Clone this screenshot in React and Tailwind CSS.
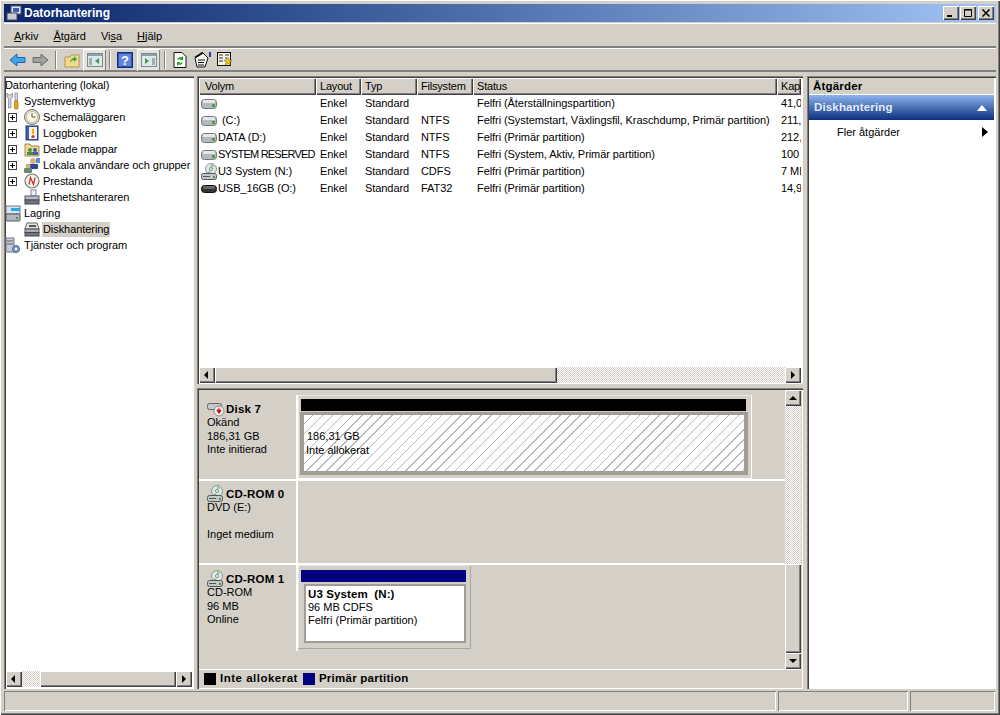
import React from "react";

const raised =
  "bg-[#d4d0c8] shadow-[inset_1px_1px_0_#fff,inset_-1px_-1px_0_#404040,inset_-2px_-2px_0_#808080]";
const sunken = "shadow-[inset_1px_1px_0_#808080,inset_-1px_-1px_0_#fff]";
const deepSunken =
  "shadow-[inset_1px_1px_0_#808080,inset_2px_2px_0_#404040,inset_-1px_-1px_0_#fff]";
const dither =
  "bg-[repeating-conic-gradient(#d4d0c8_0_25%,#ffffff_0_50%)] bg-[length:2px_2px]";

/* small drawings */
function DriveIcon({ dark }) {
  return (
    <svg width="17" height="16" viewBox="0 0 17 16">
      <rect x="0.5" y={dark ? 4.5 : 3.5} width="15" height={dark ? 7 : 9} rx="3" fill={dark ? "#333" : "#b4baba"} stroke={dark ? "#111" : "#777"} />
      <rect x="2" y={dark ? 5 : 4} width="12" height="3" rx="1" fill={dark ? "#666" : "#e6e8e8"} />
      {!dark && <rect x="11" y="8" width="3" height="3" fill="#4aa04a" />}
    </svg>
  );
}

function CdIcon() {
  return (
    <svg width="17" height="18" viewBox="0 0 17 18">
      <circle cx="10" cy="6" r="5.5" fill="#dfe6e6" stroke="#8a9a9a" />
      <circle cx="10" cy="6" r="1.5" fill="#fff" stroke="#7a8a8a" />
      <path d="M10 1l3 2-3 2zM8 8l-2 2 4 0z" fill="#7cc07c" />
      <rect x="0.5" y="10.5" width="15" height="6" rx="2" fill="#c4c8c8" stroke="#555" />
      <rect x="2" y="13" width="7" height="1" fill="#555" />
      <rect x="12" y="13" width="2" height="2" fill="#3c9a3c" />
    </svg>
  );
}

function TreeIcon({ name }) {
  if (name === "tools")
    return (
      <svg width="16" height="18" viewBox="0 0 16 18">
        <path d="M2 1v4l1.5 1.5V16H6V6.5L7.5 5V1L6 3H4z" fill="#d0d4d8" stroke="#667" strokeWidth="0.6" />
        <rect x="10" y="1" width="2.5" height="8" fill="#d8dce0" stroke="#667" strokeWidth="0.6" />
        <rect x="9.5" y="9" width="3.5" height="8" rx="1" fill="#eaa812" stroke="#8a5a00" strokeWidth="0.6" />
      </svg>
    );
  if (name === "clock")
    return (
      <svg width="16" height="16" viewBox="0 0 16 16">
        <circle cx="8" cy="8" r="7.5" fill="#e0dccc" stroke="#777" />
        <circle cx="8" cy="8" r="5.5" fill="#fbf6e4" stroke="#b5a878" strokeWidth="0.6" />
        <path d="M8 4V8h3.5" fill="none" stroke="#555" />
      </svg>
    );
  if (name === "log")
    return (
      <svg width="16" height="16" viewBox="0 0 16 16">
        <rect x="2" y="1" width="12" height="14" fill="#3a62b0" stroke="#1c3a78" />
        <rect x="5" y="2" width="8" height="12" fill="#f4f1e0" />
        <path d="M9 4v5" stroke="#e8b010" strokeWidth="2" />
        <circle cx="9" cy="11.5" r="1.6" fill="#d8342c" />
      </svg>
    );
  if (name === "share")
    return (
      <svg width="16" height="16" viewBox="0 0 16 16">
        <path d="M1 3h5l1 2h8v10H1z" fill="#f0d890" stroke="#a08a48" />
        <circle cx="6" cy="9" r="2" fill="#4d8a4d" />
        <rect x="3" y="11" width="6" height="3" fill="#4d8a4d" />
        <circle cx="11" cy="9" r="2" fill="#3a62b0" />
        <rect x="9" y="11" width="5" height="3" fill="#3a62b0" />
      </svg>
    );
  if (name === "users")
    return (
      <svg width="16" height="16" viewBox="0 0 16 16">
        <circle cx="9" cy="4" r="3" fill="#d8b088" />
        <rect x="5" y="7" width="9" height="5" rx="1" fill="#28489a" />
        <rect x="12" y="1" width="4" height="5" fill="#5b8ed8" />
        <circle cx="4" cy="9" r="2.5" fill="#d8b088" />
        <rect x="0" y="11" width="8" height="5" rx="1" fill="#688a68" />
      </svg>
    );
  if (name === "perf")
    return (
      <svg width="16" height="16" viewBox="0 0 16 16">
        <circle cx="8" cy="8" r="7" fill="#f4f1e8" stroke="#777" strokeWidth="1.2" />
        <path d="M5 11.5L6.5 4.5 9.5 11.5 11 4.5" fill="none" stroke="#c8302c" strokeWidth="1.2" />
      </svg>
    );
  if (name === "device")
    return (
      <svg width="16" height="16" viewBox="0 0 16 16">
        <rect x="7" y="1" width="5" height="6" fill="#eef0f2" stroke="#889" />
        <rect x="1" y="7" width="14" height="4" fill="#b8bcc0" stroke="#556" />
        <rect x="1" y="11" width="14" height="4" fill="#70757c" stroke="#445" />
      </svg>
    );
  if (name === "storage")
    return (
      <svg width="16" height="17" viewBox="0 0 16 17">
        <rect x="1" y="1" width="14" height="8" fill="#d8e4ee" stroke="#778" />
        <rect x="6" y="3" width="9" height="3" fill="#2ea4e0" />
        <rect x="1" y="9" width="14" height="7" rx="1" fill="#b4b8bc" stroke="#556" />
        <rect x="11" y="12" width="2" height="2" fill="#3c9a3c" />
      </svg>
    );
  if (name === "disk")
    return (
      <svg width="16" height="16" viewBox="0 0 16 16">
        <path d="M3 2h10l2 6H1z" fill="#e6e6e2" stroke="#666" />
        <rect x="5" y="4" width="7" height="2" fill="#555" />
        <rect x="1" y="8" width="14" height="3.5" fill="#a8acb0" stroke="#555" />
        <rect x="1" y="11.5" width="14" height="3.5" fill="#70757c" stroke="#445" />
      </svg>
    );
  if (name === "services")
    return (
      <svg width="16" height="17" viewBox="0 0 16 17">
        <rect x="1" y="1" width="8" height="14" fill="#c8ccd4" stroke="#778" />
        <path d="M2 4h6M2 7h6" stroke="#556" />
        <circle cx="11" cy="12" r="3.5" fill="#7aa0cc" stroke="#44668a" />
        <circle cx="11" cy="12" r="1.2" fill="#fff" />
      </svg>
    );
  return null;
}

function Expander() {
  return (
    <div className="w-[9px] h-[9px] border border-[#404040] bg-white flex items-center justify-center">
      <svg width="7" height="7" viewBox="0 0 7 7">
        <path d="M1 3.5h5M3.5 1v5" stroke="#000" />
      </svg>
    </div>
  );
}

function Arrow({ dir }) {
  const paths = {
    left: "M5 0v8L1 4z",
    right: "M2 0v8l4-4z",
    up: "M0 6h8L4 2z",
    down: "M0 2h8L4 6z",
  };
  return (
    <svg width="8" height="8" viewBox="0 0 8 8">
      <path d={paths[dir]} fill="#000" />
    </svg>
  );
}

function ScrollBtn({ dir }) {
  return (
    <div className={`${raised} w-[16px] h-[16px] shrink-0 flex items-center justify-center`}>
      <Arrow dir={dir} />
    </div>
  );
}

function TitleButton({ children }) {
  return (
    <div className={`${raised} w-[16px] h-[14px] flex items-center justify-center`}>
      <svg width="10" height="10" viewBox="0 0 10 10">
        {children}
      </svg>
    </div>
  );
}

function Sep({ className }) {
  return <div className={`w-px h-[18px] bg-[#808080] border-r border-r-white box-content ${className}`} />;
}

function Toolbar() {
  return (
    <div className="h-[24px] flex items-center pl-[5px] border-t border-t-white border-b-2 border-b-[#808080]">
      <svg width="17" height="16" viewBox="0 0 17 16" className="mr-[6px]">
        <path d="M1 8l7-6v3.5h8v5H8V14z" fill="#3fa4ec" stroke="#1c68b0" />
      </svg>
      <svg width="17" height="16" viewBox="0 0 17 16">
        <path d="M16 8L9 2v3.5H1v5h8V14z" fill="#a0a0a0" stroke="#6c6c6c" />
      </svg>
      <Sep className="ml-[6px] mr-[7px]" />
      <svg width="16" height="16" viewBox="0 0 16 16" className="mr-[3px]">
        <path d="M1 5h5l1-2h8v12H1z" fill="#f3d98c" stroke="#b09a50" />
        <path d="M6 11c0-3 2-5 4-5V4l3 3-3 3V8c-2 0-3 1-4 3z" fill="#38a838" />
      </svg>
      <div className="w-[23px] h-[22px] flex items-center justify-center bg-[#e6e3dd] shadow-[inset_1px_1px_0_#fff,inset_-1px_-1px_0_#808080]">
        <svg width="16" height="14" viewBox="0 0 16 14">
          <rect x="0.5" y="0.5" width="15" height="13" fill="#dfe8e8" stroke="#7c8c8c" />
          <rect x="1" y="1" width="14" height="2" fill="#8ca0b0" />
          <path d="M2 5h3v7H2z" fill="#9cb0b8" />
          <path d="M12 5v6L8 8z" fill="#3c9a5c" />
        </svg>
      </div>
      <Sep className="ml-[3px] mr-[6px]" />
      <svg width="16" height="18" viewBox="0 0 16 18">
        <rect x="0.5" y="1.5" width="15" height="15" fill="#2a55b5" stroke="#14307c" />
        <rect x="2" y="3" width="12" height="12" fill="#5f86d8" />
        <text x="8" y="14" textAnchor="middle" fontSize="13" fontWeight="700" fill="#fff" fontFamily="Liberation Sans">?</text>
      </svg>
      <div className="ml-[4px] w-[23px] h-[22px] flex items-center justify-center bg-[#e6e3dd] shadow-[inset_1px_1px_0_#fff,inset_-1px_-1px_0_#808080]">
        <svg width="16" height="14" viewBox="0 0 16 14">
          <rect x="0.5" y="0.5" width="15" height="13" fill="#dfe8e8" stroke="#7c8c8c" />
          <rect x="1" y="1" width="14" height="2" fill="#8ca0b0" />
          <path d="M11 5h3v7h-3z" fill="#9cb0b8" />
          <path d="M4 5v6l4-3z" fill="#3c9a5c" />
        </svg>
      </div>
      <Sep className="ml-[4px] mr-[6px]" />
      <svg width="16" height="18" viewBox="0 0 16 18">
        <path d="M2 1.5h8l4 4v11H2z" fill="#fff" stroke="#111" />
        <path d="M6 8.5a2.5 2.5 0 014-1" fill="none" stroke="#20a020" strokeWidth="1.5" />
        <path d="M11 5v4H7.5z" fill="#20a020" />
        <path d="M10 11.5a2.5 2.5 0 01-4 1" fill="none" stroke="#20a020" strokeWidth="1.5" />
        <path d="M5 15v-4h3.5z" fill="#20a020" />
      </svg>
      <svg width="18" height="17" viewBox="0 0 18 17" className="ml-[6px]">
        <path d="M1 7l8-5 5 5-3 9H3z" fill="#f4f4f4" stroke="#111" />
        <path d="M4 9h7M4 11.5h6M4 14h6" stroke="#111" />
        <path d="M1 6.5l8-5" stroke="#111" strokeWidth="2" />
        <rect x="15" y="1" width="2" height="5" fill="#2c3a9c" />
      </svg>
      <svg width="16" height="17" viewBox="0 0 16 17" className="ml-[5px]">
        <rect x="0.5" y="1.5" width="13" height="13" fill="#f4f2e8" stroke="#111" />
        <path d="M2 4h4M2 7h4M2 10h4M8 4h4M8 7h2" stroke="#333" />
        <path d="M11 6.5l1.3 2.4 2.7.3-2 1.9.5 2.8-2.5-1.4-2.5 1.4.5-2.8-2-1.900 2.700-.3z" fill="#e8c820" stroke="#776000" strokeWidth="0.5" />
      </svg>
    </div>
  );
}

const treeRows = [
  { label: "Systemverktyg", icon: "tools", level: 1 },
  { label: "Schemaläggaren", icon: "clock", level: 2, plus: true },
  { label: "Loggboken", icon: "log", level: 2, plus: true },
  { label: "Delade mappar", icon: "share", level: 2, plus: true },
  { label: "Lokala användare och grupper", icon: "users", level: 2, plus: true },
  { label: "Prestanda", icon: "perf", level: 2, plus: true },
  { label: "Enhetshanteraren", icon: "device", level: 2 },
  { label: "Lagring", icon: "storage", level: 1 },
  { label: "Diskhantering", icon: "disk", level: 2, selected: true },
  { label: "Tjänster och program", icon: "services", level: 1 },
];

function TreePane() {
  return (
    <div className={`w-[190px] bg-white flex flex-col ${deepSunken} pl-[1px] pr-[2px] py-[2px]`}>
      <div className="flex-1 overflow-hidden tracking-[-0.07px]">
        <div className="h-[15px] leading-[14px]">Datorhantering (lokal)</div>
        {treeRows.map((row) => (
          <div key={row.label} className="h-[16px] flex items-center whitespace-nowrap">
            {row.level === 2 ? (
              <>
                <div className="w-[19px] pl-[3px] flex items-center">{row.plus && <Expander />}</div>
                <div className="w-[16px] h-[16px] flex items-center justify-center shrink-0">
                  <TreeIcon name={row.icon} />
                </div>
              </>
            ) : (
              <div className="w-[16px] h-[16px] flex items-center justify-center shrink-0">
                <TreeIcon name={row.icon} />
              </div>
            )}
            <span className={`ml-[2px] px-[1px] leading-[15px] ${row.selected ? "bg-[#d4d0c8]" : ""}`}>
              {row.label}
            </span>
          </div>
        ))}
      </div>
      <div className="h-[16px] flex items-stretch shrink-0 ml-[1px]">
        <ScrollBtn dir="left" />
        <div className={`w-[18px] ${dither}`} />
        <div className={`${raised} flex-1`} />
        <ScrollBtn dir="right" />
      </div>
    </div>
  );
}

const columns = [
  { label: "Volym", w: "w-[117px] pl-[6px]" },
  { label: "Layout", w: "w-[45px] pl-[4px]" },
  { label: "Typ", w: "w-[56px] pl-[4px]" },
  { label: "Filsystem", w: "w-[56px] pl-[4px]" },
  { label: "Status", w: "w-[304px] pl-[4px]" },
  { label: "Kapacitet", w: "flex-1 pl-[4px]" },
];

const volumes = [
  { name: "", icon: "drive", fs: "", status: "Felfri (Återställningspartition)", cap: "41,00 GB" },
  { name: "(C:)", icon: "drive", fs: "NTFS", status: "Felfri (Systemstart, Växlingsfil, Kraschdump, Primär partition)", cap: "211,00 GB", gap: true },
  { name: "DATA (D:)", icon: "drive", fs: "NTFS", status: "Felfri (Primär partition)", cap: "212,00 GB" },
  { name: "SYSTEM RESERVED", icon: "drive", fs: "NTFS", status: "Felfri (System, Aktiv, Primär partition)", cap: "100 MB", tight: true },
  { name: "U3 System (N:)", icon: "cd", fs: "CDFS", status: "Felfri (Primär partition)", cap: "7 MB" },
  { name: "USB_16GB (O:)", icon: "usb", fs: "FAT32", status: "Felfri (Primär partition)", cap: "14,90 GB" },
];

function VolumeList() {
  return (
    <div className={`h-[308px] bg-white flex flex-col p-[2px] pb-[1px] ${deepSunken}`}>
      <div className="h-[17px] flex shrink-0 tracking-[-0.2px]">
        {columns.map((c) => (
          <div
            key={c.label}
            className={`${c.w} ${raised} leading-[17px] overflow-hidden whitespace-nowrap`}
          >
            {c.label}
          </div>
        ))}
      </div>
      <div className="flex-1 overflow-hidden tracking-[-0.07px]">
        {volumes.map((v, i) => (
          <div key={i} className="h-[17px] flex items-center whitespace-nowrap">
            <div className="w-[117px] pl-[2px] flex items-center overflow-hidden">
              <div className="w-[17px] h-[17px] flex items-center shrink-0">
                {v.icon === "cd" ? <CdIcon /> : <DriveIcon dark={v.icon === "usb"} />}
              </div>
              <span className={v.gap ? "ml-[4px]" : v.tight ? "tracking-[-0.8px]" : ""}>{v.name}</span>
            </div>
            <div className="w-[45px] pl-[4px]">Enkel</div>
            <div className="w-[56px] pl-[4px]">Standard</div>
            <div className="w-[56px] pl-[4px]">{v.fs}</div>
            <div className="w-[304px] pl-[4px]">{v.status}</div>
            <div className="flex-1 pl-[4px] overflow-hidden">{v.cap}</div>
          </div>
        ))}
      </div>
      <div className="h-[16px] flex shrink-0">
        <ScrollBtn dir="left" />
        <div className={`${raised} w-[342px]`} />
        <div className={`flex-1 ${dither}`} />
        <ScrollBtn dir="right" />
      </div>
    </div>
  );
}

function DiskLabel({ icon, title, lines, top }) {
  return (
    <div className={`w-[99px] shrink-0 pl-[8px] border-r-2 border-r-white leading-[13.5px] ${top}`}>
      <div className="flex items-center h-[14px] font-bold text-[11.5px] tracking-[0.2px]">
        <div className="w-[19px] h-[14px] flex items-center shrink-0">{icon}</div>
        <span className="mt-[2px]">{title}</span>
      </div>
      {lines.map((l, i) => (
        <div key={i} className={l === "Inget medium" ? "mt-[13.5px]" : ""}>
          {l}
        </div>
      ))}
    </div>
  );
}

function DiskPane() {
  return (
    <div className={`flex-1 flex flex-col min-h-0 p-[2px] pb-0 ${deepSunken}`}>
      <div className="h-[279px] flex shrink-0">
        <div className="w-[586px] overflow-hidden">
          <div className="h-[5px]" />
          <div className="h-[86px] flex border-b-2 border-b-white">
            <DiskLabel
              top="pt-[7px]"
              icon={
                <svg width="18" height="15" viewBox="0 0 18 15">
                  <rect x="0.5" y="1.5" width="14" height="6" rx="2" fill="#c4c8c8" stroke="#666" />
                  <circle cx="12" cy="9" r="5" fill="#f4f4f4" stroke="#888" />
                  <path d="M12 5.5v4M9.8 8L12 11.5 14.2 8z" fill="#c81c1c" stroke="#c81c1c" />
                </svg>
              }
              title="Disk 7"
              lines={["Okänd", "186,31 GB", "Inte initierad"]}
            />
            <div className="w-[454px] h-[84px] border border-[#e8e6e0] border-r-white border-b-white pt-[3px] pl-[1px] pr-[3px] flex flex-col">
              <div className="h-[12px] bg-black shrink-0 ml-[1px] mr-[2px]" />
              <div className="h-[63px] mt-[1px] border-[4px] border-t-[3px] border-[#a09d96] leading-[13.5px] pl-[2px] pt-[15px] bg-[repeating-linear-gradient(135deg,#fff_0_6px,#b8b8b8_6px_7px)]">
                <div className="pl-[1px]">186,31 GB</div>
                <div>Inte allokerat</div>
              </div>
            </div>
          </div>
          <div className="h-[84px] flex border-b-2 border-b-white">
            <DiskLabel
              top="pt-[6px]"
              icon={<CdIcon />}
              title="CD-ROM 0"
              lines={["DVD (E:)", "Inget medium"]}
            />
          </div>
          <div className="h-[86px] flex">
            <DiskLabel
              top="pt-[7px]"
              icon={<CdIcon />}
              title="CD-ROM 1"
              lines={["CD-ROM", "96 MB", "Online"]}
            />
            <div className="w-[173px] h-[84px] border border-[#a8a59e] border-t-[#e8e6e0] border-l-[#e8e6e0] pt-[4px] pl-[1px] pr-[4px] flex flex-col">
              <div className="h-[12px] bg-[#000080] shrink-0 ml-[1px]" />
              <div className="h-[59px] mt-[2px] ml-[4px] border-[2px] border-[#a09d96] bg-white leading-[13px] pl-[2px] pt-[2px]">
                <div className="font-bold text-[11.5px] tracking-[0.1px]">U3 System&nbsp; (N:)</div>
                <div>96 MB CDFS</div>
                <div>Felfri (Primär partition)</div>
              </div>
            </div>
          </div>
        </div>
        <div className="w-[16px] flex flex-col shrink-0">
          <ScrollBtn dir="up" />
          <div className={`h-[158px] ${dither}`} />
          <div className={`${raised} flex-1`} />
          <ScrollBtn dir="down" />
        </div>
      </div>
      <div className="flex-1 border-t border-t-white flex items-center pl-[5px] font-bold text-[11.5px] pb-[2px]">
        <div className="w-[12px] h-[12px] bg-black mr-[4px]" />
        <span className="mr-[5px] tracking-[0.5px]">Inte allokerat</span>
        <div className="w-[12px] h-[12px] bg-[#000080] mr-[4px]" />
        <span className="tracking-[0.25px]">Primär partition</span>
      </div>
    </div>
  );
}

function ActionPane() {
  return (
    <div className={`flex-1 bg-white flex flex-col p-[2px] ${deepSunken}`}>
      <div className="h-[16px] bg-[#d4d0c8] font-bold text-[11.5px] tracking-[0.2px] pl-[4px] leading-[16px] shrink-0">
        Åtgärder
      </div>
      <div className="h-[25px] mt-[1px] bg-gradient-to-b from-[#8fb4ee] to-[#0e2f7e] flex items-center justify-between pl-[5px] pr-[7px] text-[#e4ecfa] font-bold text-[11.5px] tracking-[0.15px] shrink-0">
        <span>Diskhantering</span>
        <svg width="10" height="6" viewBox="0 0 10 6">
          <path d="M0 6h10L5 0z" fill="#fff" />
        </svg>
      </div>
      <div className="h-[24px] flex items-center justify-between pl-[28px] pr-[6px]">
        <span>Fler åtgärder</span>
        <svg width="6" height="10" viewBox="0 0 6 10">
          <path d="M0 0v10l6-5z" fill="#000" />
        </svg>
      </div>
    </div>
  );
}

export default function App() {
  return (
    <div className="w-[1000px] h-[715px] bg-[#d4d0c8] flex flex-col p-[4px] text-[11px] text-black font-['Liberation_Sans',sans-serif] overflow-hidden shadow-[inset_1px_1px_0_#fff,inset_-1px_-1px_0_#404040,inset_-2px_-2px_0_#808080]">
      {/* Title bar */}
      <div className="h-[18px] shrink-0 bg-gradient-to-r from-[#0a246a] to-[#a3c4f5] flex items-center pl-[2px] pr-[2px] text-white font-bold text-[12px]">
        <svg width="16" height="16" viewBox="0 0 16 16" className="mr-[2px]">
          <rect x="5" y="1" width="10" height="8" fill="#dfe6f0" stroke="#556" />
          <rect x="7" y="3" width="6" height="4" fill="#3060c0" />
          <rect x="1" y="8" width="10" height="7" fill="#c8ccd0" stroke="#445" />
        </svg>
        <span>Datorhantering</span>
        <div className="ml-auto flex gap-[1px] items-center">
          <TitleButton>
            <path d="M1 7h5v2H1z" fill="#000" />
          </TitleButton>
          <TitleButton>
            <path d="M1.5 1.5h7v7h-7zM1 2h8" fill="none" stroke="#000" />
          </TitleButton>
          <div className="ml-[1px]">
            <TitleButton>
              <path d="M1.5 1.5l7 7M8.5 1.5l-7 7" stroke="#000" strokeWidth="1.5" />
            </TitleButton>
          </div>
        </div>
      </div>

      {/* Menu */}
      <div className="h-[25px] mt-[1px] pt-[2px] shrink-0 flex items-center pl-[10px] gap-[15px] border-t border-t-white border-b-2 border-b-[#808080]">
        <span><u>A</u>rkiv</span>
        <span><u>Å</u>tgärd</span>
        <span>Vi<u>s</u>a</span>
        <span><u>H</u>jälp</span>
      </div>
      <Toolbar />

      {/* Panes */}
      <div className="flex-1 min-h-0 flex mt-[4px]">
        <TreePane />
        <div className="w-[3px] shrink-0" />
        <div className="w-[606px] shrink-0 flex flex-col">
          <VolumeList />
          <div className="h-[4px] shrink-0" />
          <DiskPane />
        </div>
        <div className="w-[4px] shrink-0" />
        <ActionPane />
      </div>

      {/* Status bar */}
      <div className="h-[20px] mt-[2px] shrink-0 flex gap-[2px] pr-[1px]">
        <div className={`w-[772px] ${sunken}`} />
        <div className={`w-[130px] ${sunken}`} />
        <div className={`flex-1 ${sunken}`} />
      </div>
    </div>
  );
}
